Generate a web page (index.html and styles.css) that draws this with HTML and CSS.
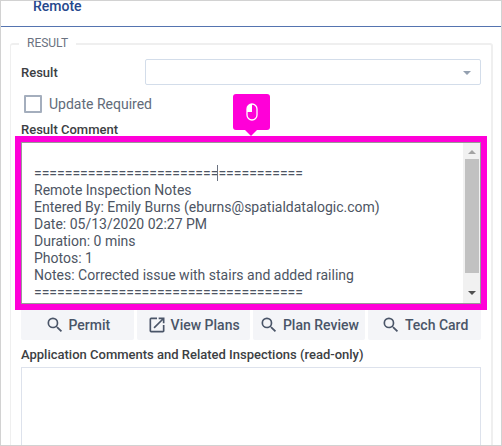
FILE: index.html
```html
<!DOCTYPE html>
<html lang="en">
<head>
<meta charset="utf-8">
<title>Inspection Result</title>
<link rel="stylesheet" href="styles.css">
</head>
<body>
<svg class="sprite" aria-hidden="true">
  <symbol id="search" viewBox="0 0 24 24"><path d="M15.5 14h-.79l-.28-.27A6.47 6.47 0 0 0 16 9.500 6.500 6.500 0 1 0 9.500 16c1.610 0 3.090-.59 4.230-1.570l.27.28v.79l5 4.990L20.490 19l-4.990-5zm-6 0a4.500 4.500 0 1 1 0-9 4.500 4.500 0 0 1 0 9z"/></symbol>
  <symbol id="open" viewBox="0 0 24 24"><path d="M19 19H5V5h7V3H5a2 2 0 0 0-2 2v14a2 2 0 0 0 2 2h14c1.100 0 2-.9 2-2v-7h-2v7zM14 3v2h3.590l-9.830 9.830 1.410 1.410L19 6.410V10h2V3h-7z"/></symbol>
</svg>
<div class="app">
  <nav class="tabs"><a class="tab" href="#remote">Remote</a></nav>
  <main class="content">
    <fieldset class="panel">
      <legend>RESULT</legend>
      <div class="form">
        <div class="row">
          <label class="label" for="result">Result</label>
          <div class="select-wrap">
            <select id="result" class="select"><option></option></select>
            <span class="arrow"></span>
          </div>
        </div>
        <label class="check"><input type="checkbox"><span>Update Required</span></label>
        <label class="label comment-label" for="comment">Result Comment</label>
        <div class="comment">
          <textarea id="comment" class="notes" spellcheck="false">

===================================
Remote Inspection Notes
Entered By: Emily Burns (eburns@spatialdatalogic.com)
Date: 05/13/2020 02:27 PM
Duration: 0 mins
Photos: 1
Notes: Corrected issue with stairs and added railing
===================================</textarea>
          <span class="pointer"></span>
          <div class="scrollbar"><span class="up"></span><span class="thumb"></span><span class="down"></span></div>
          <div class="callout">
            <svg width="12" height="18" viewBox="0 0 12 18"><path d="M6 1v8H1V6a5 5 0 0 1 5-5z" fill="#fff"/><rect x="1" y="1" width="10" height="16" rx="5" fill="none" stroke="#fff" stroke-width="1.300"/></svg>
          </div>
        </div>
        <div class="actions">
          <button type="button"><svg><use href="#search"/></svg>Permit</button>
          <button type="button"><svg><use href="#open"/></svg>View Plans</button>
          <button type="button"><svg><use href="#search"/></svg>Plan Review</button>
          <button type="button"><svg><use href="#search"/></svg>Tech Card</button>
        </div>
        <label class="label app-label" for="app">Application Comments and Related Inspections (read-only)</label>
        <textarea id="app" class="readonly" readonly></textarea>
      </div>
    </fieldset>
  </main>
</div>
</body>
</html>
```
FILE: styles.css
```css
* { box-sizing: border-box; }
body {
  margin: 0;
  font: 14px/17px Roboto, "Liberation Sans", sans-serif;
  color: #4a5568;
  background: #fff;
}
.sprite { display: none; }
.app {
  height: 100vh;
  border: 1px solid #d2d2d2;
  overflow: hidden;
}
.tabs {
  height: 26px;
  padding: 0 32px;
  border-bottom: 1px solid #5574b0;
}
.tab {
  display: block;
  line-height: 10px;
  font-weight: 500;
  color: #26488c;
  text-decoration: none;
}
.content { padding: 8px 8px 0 9px; }
.panel {
  margin: 0;
  padding: 0 10px;
  min-width: 0;
  border: 2px solid #efefef;
  border-left-width: 1px;
  border-radius: 3px;
}
legend {
  margin-left: -2px;
  padding: 0 8px;
  font-size: 12px;
  color: #6b7280;
}
.form { display: flex; flex-direction: column; padding-top: 7px; }
.row { display: grid; grid-template-columns: 124px 1fr; align-items: center; }
.label { font-size: 13px; font-weight: 500; color: #3c4043; }
.select-wrap { position: relative; }
.select {
  display: block;
  appearance: none;
  width: 100%;
  height: 26px;
  border: 1px solid #d3ddea;
  border-radius: 2px;
  background: #fff;
}
.arrow {
  position: absolute;
  right: 10px;
  top: 12px;
  border: 4px solid transparent;
  border-top-color: #94a0b0;
  border-bottom: 0;
  pointer-events: none;
}
.check {
  display: flex;
  align-items: center;
  gap: 7px;
  height: 18px;
  margin: 10px 0 0 3px;
  color: #626b79;
}
.check input {
  appearance: none;
  width: 18px;
  height: 18px;
  margin: 0;
  border: 2px solid #a4aebd;
  border-radius: 1px;
}
.comment-label { margin-top: 8px; }
.comment {
  position: relative;
  height: 162px;
  margin-top: 4px;
  outline: 6px solid #ff00d8;
  z-index: 1;
}
.notes, .readonly {
  display: block;
  width: 100%;
  resize: none;
  outline: 0;
  background: #fff;
}
.notes {
  height: 100%;
  padding: 5px 20px 0 12px;
  border: 1px solid #989898;
  font: inherit;
  color: #4d5563;
  overflow: hidden;
}
.pointer {
  position: absolute;
  left: 196px;
  top: 23px;
  width: 1px;
  height: 16px;
  background: #6b7280;
}
.scrollbar {
  position: absolute;
  top: 1px;
  right: 1px;
  bottom: 1px;
  width: 17px;
  display: flex;
  flex-direction: column;
  align-items: center;
  background: #f1f1f1;
}
.up, .down { border: 4px solid transparent; }
.up { border-top: 0; border-bottom-color: #a3a3a3; margin: 7px 0 5px; }
.down { border-bottom: 0; border-top-color: #505050; margin: 18px 0 8px; }
.thumb { width: 14px; flex: 1; background: #c1c1c1; }
.callout {
  position: absolute;
  left: 50%;
  bottom: 100%;
  margin: 0 0 12px -18px;
  width: 37px;
  height: 36px;
  display: grid;
  place-items: center;
  border-radius: 3px;
  background: #ff00d8;
}
.callout::after {
  content: "";
  position: absolute;
  top: 100%;
  left: 12px;
  border: 6px solid transparent;
  border-top-color: #ff00d8;
  border-bottom: 0;
}
.actions {
  display: grid;
  grid-template-columns: repeat(4, 1fr);
  gap: 3px;
  margin-top: 4px;
}
.actions button {
  display: flex;
  align-items: center;
  justify-content: center;
  gap: 4px;
  height: 32px;
  padding: 2px 0 0;
  border: 0;
  border-radius: 2px;
  background: #f4f5f8;
  font: inherit;
  font-weight: 500;
  color: #4a5568;
  white-space: nowrap;
}
.actions svg { width: 20px; height: 20px; fill: currentColor; }
.app-label { margin-top: 6px; }
.readonly {
  height: calc(100vh - 350px);
  margin-top: 4px;
  border: 1px solid #dde2ec;
}
```
